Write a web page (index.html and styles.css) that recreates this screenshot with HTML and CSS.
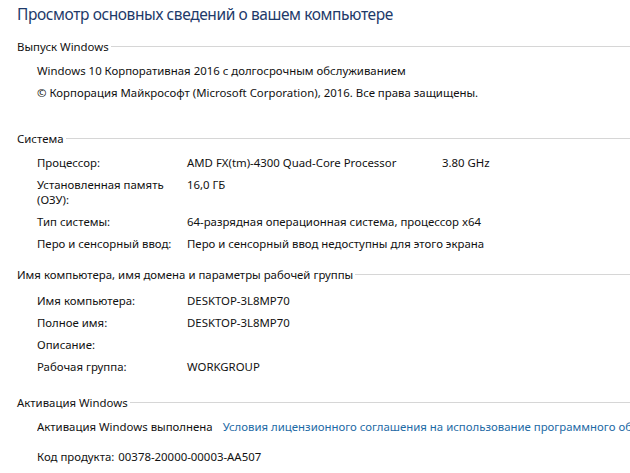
FILE: index.html
```html
<!DOCTYPE html>
<html lang="ru">
<head>
<meta charset="utf-8">
<title>Система</title>
<link rel="stylesheet" href="styles.css">
</head>
<body>
<main class="page">
  <h1 class="title">Просмотр основных сведений о вашем компьютере</h1>

  <section class="group group-edition">
    <div class="group-head"><span>Выпуск Windows</span></div>
    <div class="rows">
      <div class="line">Windows 10 Корпоративная 2016 с долгосрочным обслуживанием</div>
      <div class="line">© Корпорация Майкрософт (Microsoft Corporation), 2016. Все права защищены.</div>
    </div>
  </section>

  <section class="group group-system">
    <div class="group-head"><span>Система</span></div>
    <div class="rows">
      <div class="row"><div class="label">Процессор:</div><div class="value value-split"><span>AMD FX(tm)-4300 Quad-Core Processor</span><span>3.80 GHz</span></div></div>
      <div class="row"><div class="label">Установленная память (ОЗУ):</div><div class="value">16,0 ГБ</div></div>
      <div class="row"><div class="label">Тип системы:</div><div class="value">64-разрядная операционная система, процессор x64</div></div>
      <div class="row"><div class="label">Перо и сенсорный ввод:</div><div class="value">Перо и сенсорный ввод недоступны для этого экрана</div></div>
    </div>
  </section>

  <section class="group group-name">
    <div class="group-head"><span>Имя компьютера, имя домена и параметры рабочей группы</span></div>
    <div class="rows">
      <div class="row"><div class="label">Имя компьютера:</div><div class="value">DESKTOP-3L8MP70</div></div>
      <div class="row"><div class="label">Полное имя:</div><div class="value">DESKTOP-3L8MP70</div></div>
      <div class="row"><div class="label">Описание:</div><div class="value"></div></div>
      <div class="row"><div class="label">Рабочая группа:</div><div class="value">WORKGROUP</div></div>
    </div>
  </section>

  <section class="group group-activation">
    <div class="group-head"><span>Активация Windows</span></div>
    <div class="rows">
      <div class="line activation"><span>Активация Windows выполнена</span><a class="link" href="#">Условия лицензионного соглашения на использование программного обеспечения корпорации Майкрософт</a></div>
      <div class="line product"><span>Код продукта:</span><span>00378-20000-00003-AA507</span></div>
    </div>
  </section>
</main>
</body>
</html>
```

FILE: styles.css
```css
html, body {
  margin: 0;
  padding: 0;
  background: #ffffff;
  overflow: hidden;
}

body {
  font-family: "Noto Sans", "Open Sans", sans-serif;
  font-size: 11.4px;
  color: #111111;
}

.page {
  padding-left: 17px;
  width: 613px;
}

.title {
  margin: 0;
  font-size: 15.5px;
  letter-spacing: -0.4px;
  font-weight: normal;
  line-height: 28px;
  color: #1e3a6a;
  white-space: nowrap;
}

.group-head {
  display: flex;
  align-items: center;
  height: 22px;
  white-space: nowrap;
}

.group-head::after {
  content: "";
  flex: 1;
  height: 1px;
  background: #d6d6d6;
  margin-left: 2px;
}

.rows {
  padding-left: 20px;
  margin-top: 2px;
}

.line,
.row {
  padding: 3.5px 0;
  line-height: 15px;
  white-space: nowrap;
}

.row {
  display: grid;
  grid-template-columns: 150px 1fr;
}

.label {
  white-space: normal;
  padding-right: 4px;
}

.value-split {
  display: grid;
  grid-template-columns: 255px auto;
}

.group-edition { margin-top: 7.5px; }
.group-system { margin-top: 24px; }
.group-name { margin-top: 9px; }
.group-activation { margin-top: 14px; }

.group-name .rows { margin-top: 4px; }

.activation {
  display: flex;
  gap: 10px;
  overflow: hidden;
}

.link {
  color: #1d6aa5;
  text-decoration: none;
}

.product {
  display: flex;
  gap: 4px;
  margin-top: 8px;
}
```
